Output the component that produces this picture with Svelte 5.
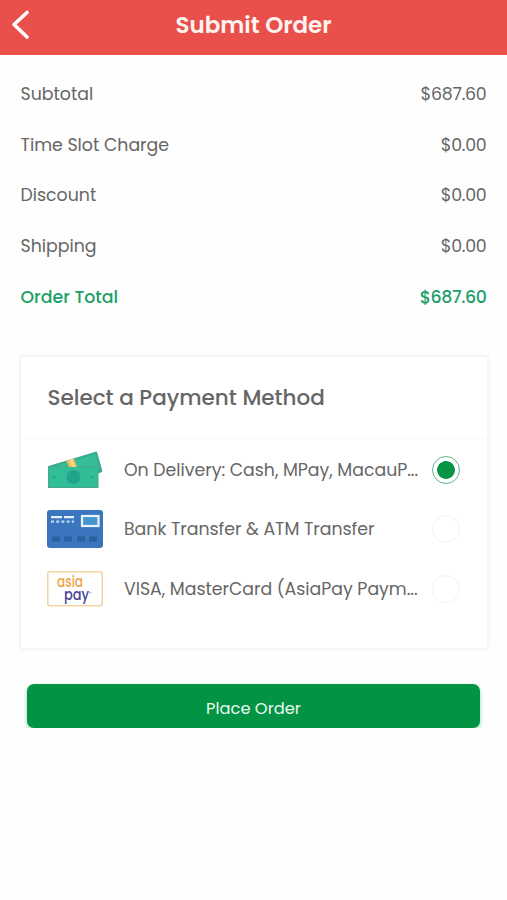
<script>
  let selected = $state('delivery')

  const totals = [
    { label: 'Subtotal', value: '$687.60' },
    { label: 'Time Slot Charge', value: '$0.00' },
    { label: 'Discount', value: '$0.00' },
    { label: 'Shipping', value: '$0.00' },
    { label: 'Order Total', value: '$687.60', total: true },
  ]

  const methods = [
    { id: 'delivery', label: 'On Delivery: Cash, MPay, MacauP...' },
    { id: 'bank', label: 'Bank Transfer & ATM Transfer' },
    { id: 'asiapay', label: 'VISA, MasterCard (AsiaPay Paym...' },
  ]
</script>

<header>
  <button class="back" type="button" aria-label="Back">
    <svg width="20" height="32" viewBox="0 0 20 32">
      <path d="M17 4.500L4 16.500L17 29" fill="none" stroke="#fff" stroke-width="3.6" stroke-linecap="round" stroke-linejoin="round" />
    </svg>
  </button>
  <h1>Submit Order</h1>
</header>

<main>
  <dl class="totals">
    {#each totals as row}
      <div class="row" class:total={row.total}>
        <dt>{row.label}</dt>
        <dd>{row.value}</dd>
      </div>
    {/each}
  </dl>

  <section class="card">
    <h2>Select a Payment Method</h2>
    <div class="methods">
      {#each methods as method (method.id)}
        <label class="method">
          <span class="icon">
            {#if method.id === 'delivery'}
              <svg width="56" height="40" viewBox="0 0.5 56 40">
                <path d="M1.500 17L49.500 2.500L55 22L51 23.500V17Z" fill="#2ab491" stroke="#48a28a" />
                <path d="M8 17L48 5L52 18V20H51V16.500Z" fill="#35be99" />
                <rect x="1.500" y="17" width="49.500" height="21" fill="#30bd98" stroke="#4aa78f" />
                <path d="M19 11.500L27 9L30 17.500H22Z" fill="#edbd57" />
                <path d="M22 10.500L25.500 9.500L28.500 17.500H25Z" fill="#f5d891" />
                <circle cx="26.500" cy="27.500" r="7" fill="#20a58a" />
                <path d="M6 27.500h3M43 27.500h3" stroke="#25a98a" stroke-width="2" />
              </svg>
            {:else if method.id === 'bank'}
              <svg width="56" height="38" viewBox="0 0 56 38">
                <rect width="56" height="38" rx="3" fill="#3b75be" />
                <path d="M4 7.200h11M17 7.200h10" stroke="#e5f0fc" stroke-width="2.200" />
                <path d="M4 11.700h23" stroke="#bdd6f1" stroke-width="2.200" stroke-dasharray="3 2.200" />
                <rect x="35" y="6" width="16.500" height="10" fill="#4595cf" stroke="#e8f2fa" stroke-width="2.200" />
                <path d="M5 29h8M17 29h8M30 29h8M42 29h8" stroke="#2c609f" stroke-width="5" />
              </svg>
            {:else}
              <svg width="56" height="36" viewBox="0 0 56 36">
                <rect x="0.750" y="0.750" width="54.500" height="34" rx="2" fill="#fff" stroke="#f1d5a0" stroke-width="1.500" />
                <text class="asia" x="10" y="15.500" textLength="26" lengthAdjust="spacingAndGlyphs">asia</text>
                <text class="pay" x="17" y="28.500" textLength="25" lengthAdjust="spacingAndGlyphs">pay</text>
                <text class="mark" x="42" y="23.500">®</text>
              </svg>
            {/if}
          </span>
          <span class="name">{method.label}</span>
          <input type="radio" name="payment" value={method.id} bind:group={selected} />
        </label>
      {/each}
    </div>
  </section>

  <button class="submit" type="button">Place Order</button>
</main>

<style>
  :global(body) {
    background: #fefefe;
    color: #666;
    font-family: Poppins, Inter, "Liberation Sans", sans-serif;
    font-size: 17.35px;
  }

  header {
    display: grid;
    grid-template-columns: 60px 1fr 60px;
    align-items: center;
    height: 55px;
    background: #e9504b;
    color: #fff3f1;
  }

  .back {
    display: flex;
    padding: 0 0 7px 10px;
    border: 0;
    background: none;
  }

  h1 {
    margin: 0 0 5px;
    font-size: 23px;
    font-weight: 600;
    line-height: 30px;
    text-align: center;
  }

  main {
    display: flex;
    flex-direction: column;
    padding: 13.5px 20px 0 20.5px;
  }

  .totals {
    margin: 0;
  }

  .row {
    display: flex;
    align-items: center;
    justify-content: space-between;
    height: 50.7px;
  }

  dd {
    margin: 0 0.5px 0 0;
    letter-spacing: -0.25px;
  }

  .total {
    color: #219f67;
    font-weight: 500;
  }

  .total dd {
    letter-spacing: -0.4px;
  }

  .card {
    box-sizing: border-box;
    height: 291px;
    margin-top: 35px;
    padding: 0 27px;
    background: #fff;
    box-shadow: 0 0 4px 1px #ececec;
  }

  h2 {
    margin: 0 -27px;
    padding: 0 27px;
    border-bottom: 1px solid #fafafa;
    font-size: 21.5px;
    font-weight: 500;
    line-height: 82px;
  }

  .method {
    display: flex;
    align-items: center;
    height: 59.5px;
  }

  .icon {
    display: flex;
    flex: 0 0 77px;
    margin-left: -0.5px;
  }

  .name {
    flex: 1;
    letter-spacing: -0.02px;
    white-space: nowrap;
  }

  .asia,
  .pay {
    font-size: 16px;
    font-weight: 500;
  }

  .asia {
    fill: #efa546;
  }

  .pay {
    fill: #484499;
  }

  .mark {
    font-size: 5px;
    fill: #484499;
  }

  input {
    appearance: none;
    flex: none;
    width: 28px;
    height: 28px;
    margin: 0;
    border: 1.5px solid #f2f2f2;
    border-radius: 50%;
    background: #fff;
  }

  input:checked {
    border-color: #60b48a;
    background: radial-gradient(circle, #069445 8.500px, #fff 9.200px);
  }

  .submit {
    height: 44px;
    margin: 36px 7px 0 6.5px;
    padding: 5px 0 0;
    border: 0;
    border-radius: 7px;
    background: #039345;
    box-shadow: 0 2px 4px #8fdab4;
    color: #e9f9ef;
    font: inherit;
    font-size: 16.3px;
  }
</style>
